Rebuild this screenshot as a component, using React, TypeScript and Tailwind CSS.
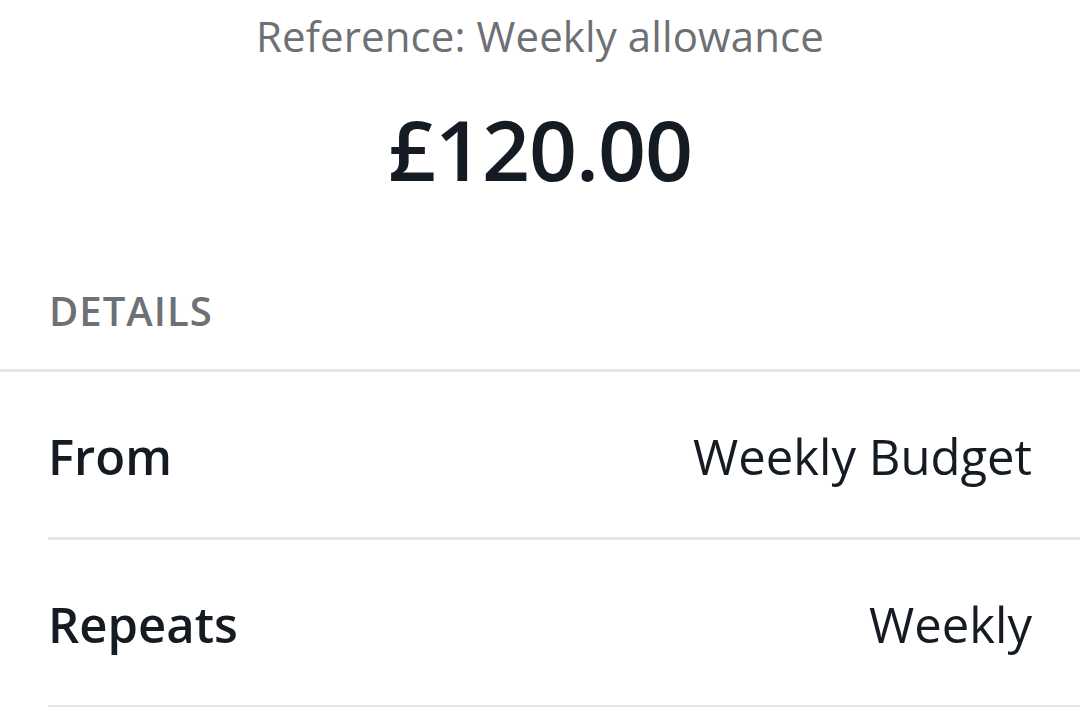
export default function App() {
  const rows = [
    { label: "From", value: "Weekly Budget" },
    { label: "Repeats", value: "Weekly" },
  ];

  return (
    <div className="min-h-screen bg-white font-['Open_Sans',sans-serif] text-[#141b22]">
      {/* Header */}
      <div className="flex flex-col items-center">
        <p className="pt-[7px] text-[42px] leading-[58px] tracking-[0.1px] text-[#6d7075]">Reference: Weekly allowance</p>
        <h1 className="mt-[27px] text-[84px] font-semibold leading-[114px] tracking-[-1px]">£120.00</h1>
      </div>

      {/* Details */}
      <div className="mt-[78px] px-[49px] text-[40px] font-semibold leading-[54px] tracking-[1px] text-[#6d7075]">DETAILS</div>
      <div className="mt-[31px] border-t-[3px] border-[#e4e5e6]">
        {rows.map((r) => (
          <div key={r.label} className="ml-[48px] flex items-center justify-between border-b-[3px] border-[#e4e5e6] pb-[48px] pr-[48px] pt-[52px] text-[49px] leading-[65px]">
            <span className="font-semibold">{r.label}</span>
            <span>{r.value}</span>
          </div>
        ))}
      </div>
    </div>
  );
}
